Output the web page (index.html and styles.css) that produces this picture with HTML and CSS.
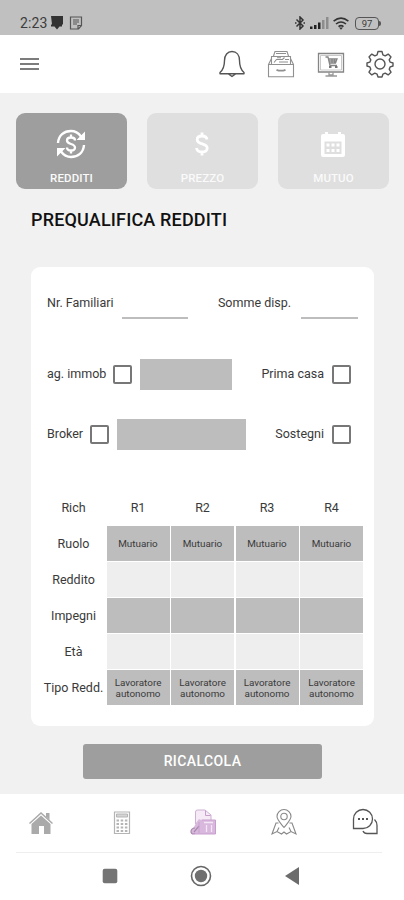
FILE: index.html
```html
<!DOCTYPE html>
<html lang="it">
<head>
<meta charset="utf-8">
<title>Prequalifica redditi</title>
<link rel="stylesheet" href="styles.css">
</head>
<body>
<div class="status">
  <span class="time">2:23</span>
  <svg class="st-msg" width="12" height="14" viewBox="0 0 12 14"><path fill="#333" d="M0 0h12v8.500h-1v2H8.500L6 13.500l-2.500-3H0v-2h1z"/></svg>
  <svg class="st-note" width="14" height="14" viewBox="0 0 14 14" fill="none" stroke="#555" stroke-width="1.200"><path d="M1.500 1h11v8.500L9.500 13h-8zM4 4h6M4 6h6M4 8h4M9 12.500V9.500h3"/></svg>
  <span class="spacer"></span>
  <svg class="st-bt" width="10" height="14" viewBox="0 0 10 14" fill="none" stroke="#333" stroke-width="1.500"><path d="M1.500 3.500l6.500 6.500-3 3V1l3 3-6.500 6.500M0 7h1.500M8.500 7H10"/></svg>
  <svg class="st-sig" width="19" height="12" viewBox="0 0 19 12"><path fill="#222" d="M0 9.500h2.500V12H0zM4 8h2.500v4H4zM8 5.500h2.500V12H8z"/><path fill="#8d8d8d" d="M12 3h2.500v9H12zM16 0h2.500v12H16z"/></svg>
  <svg class="st-wifi" width="16" height="13" viewBox="0 0 16 13" fill="none" stroke="#333" stroke-width="1.600"><path d="M.6 4.200q7.400-6 14.800 0M3 7q5-4 10 0M5.500 9.600q2.500-2 5 0"/><path fill="#333" stroke="none" d="M6 10.500h4l-2 2.300z"/></svg>
  <span class="battery">97</span><span class="tip"></span>
</div>
<header class="top">
  <div class="menu"><i></i><i></i><i></i></div>
  <span class="spacer"></span>
  <svg width="28" height="28" viewBox="0 0 28 28" fill="none" stroke="#555" stroke-width="1.400" stroke-linejoin="round"><path d="M2 22.500c3.500-3 4.500-6 4.500-12C6.500 5 9.500 1.500 14 1.500s7.500 3.500 7.500 9c0 6 1 9 4.500 12v1.200H2zM10.500 24l3.500 2.500 3.500-2.500"/></svg>
  <svg width="28" height="28" viewBox="0 0 28 28" fill="none" stroke="#909090" stroke-width="1.100"><path d="M1.500 14.500h25v12.300h-25zM1.500 14.500l3-6M26.500 14.500l-3-6M4.500 14V6.500h19V14M6.500 6L8 1.500h12L21.500 6M9 3.500h10M7 12.500l2.500-3h6l2-2M12 12h9M10 7.800h4M18 9.500h4"/><path stroke-width="1.800" d="M9.500 19.800q4.500 1.800 9 0"/></svg>
  <svg width="28" height="28" viewBox="0 0 28 28" fill="none" stroke="#858585" stroke-width="1.300"><path d="M1.500 3.500h25v18.500h-25z"/><path stroke="#bbb" stroke-width=".8" d="M3.500 5.500h21v14.500h-21z"/><path d="M8.500 7h2.500l2 8.500h7M11.500 9h8.500l-1.500 4h-6M12 11h7M15 9v4M17.500 9v4"/><path fill="#777" stroke="none" d="M12 16h2.500v2H12zM18 16h2.500v2H18z"/><path stroke="#999" d="M12 22v3h4v-3M8.500 26h11.500"/></svg>
  <svg width="28" height="28" viewBox="0 0 28 28" fill="none" stroke="#555" stroke-width="1.400" stroke-linejoin="round"><circle cx="14" cy="14" r="5"/><path d="M12 1.500h4l.9 3.400 2.300 1 3-1.800 2.800 2.800-1.800 3 1 2.300 2.800.8v3l-2.800.9-1 2.300 1.800 3-2.800 2.700-3-1.700-2.300 1-.9 2.800h-4l-.9-2.800-2.300-1-3 1.700L3 22.200l1.800-3-1-2.300L1 16v-3l2.800-.8 1-2.300-1.800-3 2.800-2.800 3 1.800 2.300-1z"/></svg>
</header>
<main>
  <nav class="tabs">
    <div class="tab active">
      <svg width="30" height="30" viewBox="0 0 30 30" fill="none" stroke="#fff" stroke-width="2.400"><path d="M2 14C2.500 6.500 8 2 15 2q6 0 10 5.500M28 16c-.5 7.500-6 12-13 12q-6 0-10-5.500"/><path fill="#fff" stroke="none" d="M29 2.500v8.500h-8.500zM1 27.500v-8.500h8.500z"/><path stroke-width="2.300" d="M19 11.500c0-2-1.700-3-4-3s-4 1-4 3c0 4.500 8 2.500 8 7 0 2-1.700 3-4 3s-4-1-4-3M15 5.500v3M15 21.500v3"/></svg>
      <span>REDDITI</span>
    </div>
    <div class="tab">
      <svg width="30" height="30" viewBox="0 0 30 30" fill="none" stroke="#fff" stroke-width="2.800"><path d="M20 10.500c-.3-2.500-2-3.500-5-3.500s-4.800 1.300-4.800 3.700c0 5.300 10 3 10 8.300 0 2.500-2 4-5.200 4s-5.200-1.300-5.400-4M15 3.500V7M15 23v3.500"/></svg>
      <span>PREZZO</span>
    </div>
    <div class="tab">
      <svg width="30" height="30" viewBox="0 0 30 30"><path fill="#fff" fill-rule="evenodd" d="M5 5h2V3h3v2h10V3h3v2h2q2 0 2 2v19q0 2-2 2H5q-2 0-2-2V7q0-2 2-2zM6.500 12.500V25h17V12.500z"/><path fill="#fff" d="M8.500 14.500h3v3h-3zM13.500 14.500h3v3h-3zM18.500 14.500h3v3h-3zM8.500 20h3v3h-3zM13.500 20h3v3h-3zM18.500 20h3v3h-3z"/></svg>
      <span>MUTUO</span>
    </div>
  </nav>
  <h1>PREQUALIFICA REDDITI</h1>
  <section class="card">
    <div class="row first">
      <label>Nr. Familiari</label><span class="line fam"></span>
      <span class="spacer"></span>
      <label>Somme disp.</label><span class="line somme"></span>
    </div>
    <div class="row">
      <label>ag. immob</label><span class="check"></span><span class="field ag"></span>
      <span class="spacer"></span>
      <label>Prima casa</label><span class="check end"></span>
    </div>
    <div class="row">
      <label>Broker</label><span class="check"></span><span class="field broker"></span>
      <span class="spacer"></span>
      <label>Sostegni</label><span class="check end"></span>
    </div>
    <div class="grid">
      <div class="name">Rich</div><div class="head">R1</div><div class="head">R2</div><div class="head">R3</div><div class="head">R4</div>
      <div class="name">Ruolo</div><div class="cell">Mutuario</div><div class="cell">Mutuario</div><div class="cell">Mutuario</div><div class="cell">Mutuario</div>
      <div class="name">Reddito</div><div class="cell light"></div><div class="cell light"></div><div class="cell light"></div><div class="cell light"></div>
      <div class="name">Impegni</div><div class="cell"></div><div class="cell"></div><div class="cell"></div><div class="cell"></div>
      <div class="name">Età</div><div class="cell light"></div><div class="cell light"></div><div class="cell light"></div><div class="cell light"></div>
      <div class="name">Tipo Redd.</div><div class="cell">Lavoratore<br>autonomo</div><div class="cell">Lavoratore<br>autonomo</div><div class="cell">Lavoratore<br>autonomo</div><div class="cell">Lavoratore<br>autonomo</div>
    </div>
  </section>
  <div class="button">RICALCOLA</div>
</main>
<nav class="bottom">
  <svg width="28" height="28" viewBox="0 0 28 28"><path fill="#aaa" d="M14 7.500L23.500 16v10h-6.500v-8h-5v8H4.500V16z"/><path fill="none" stroke="#aaa" stroke-width="1.500" d="M2.500 15.500L14 5l11.500 10.500"/><path fill="#aaa" d="M19 5h3.500v7L19 8.500z"/></svg>
  <svg width="28" height="28" viewBox="0 0 28 28" fill="none" stroke="#b4b4b4"><path stroke-width="1.200" d="M6.500 4h15v21.500h-15z"/><path fill="#d4d4d4" d="M8.500 6h11v3h-11z"/><path stroke-width="2" stroke-dasharray="2.500 1.700" d="M8.500 12.500h11.500M8.500 16h11.500M8.500 19.500h11.500M8.500 23h11.500"/></svg>
  <svg width="28" height="28" viewBox="0 0 28 28"><path fill="#f5eaf6" stroke="#cdb0d2" d="M6.500 16V4q0-2 2-2h7.500l6 5v5"/><path fill="#d9b8de" d="M7 15l3-4 4 2v13H2v-4l3-3zM13 12h13.500v14H13z"/><path fill="none" stroke="#a78bad" stroke-width="1.200" d="M6 25.500q-4.500 1-4-2.500.5-3 4-3M5 24l5-6"/><path fill="none" stroke="#f4e6f6" stroke-width="1.300" d="M15 14.500h9M17.500 17v7M22.500 17v7"/><path fill="none" stroke="#c79fcd" d="M16.500 2.500v5h5M12.500 12h14v14H3M10 14v11"/></svg>
  <svg width="28" height="28" viewBox="0 0 28 28" fill="none" stroke="#888" stroke-width="1.100"><path d="M14 19.500C9.500 14 7 11.500 7 8.500a7 7 0 0 1 14 0c0 3-2.500 5.500-7 11zM8.500 15H6L2 26l5-2.500 4.500 2.500 2.500-2 2.500 2 4.500-2.500L26 26l-4-11h-2.500M7 23.500l2-4M21 23.500l-2-4"/><circle cx="14" cy="8.500" r="3.200"/></svg>
  <svg width="28" height="28" viewBox="0 0 28 28" fill="none" stroke="#555" stroke-width="1.300"><path d="M2.500 20.500V11a9.500 9.500 0 1 1 9.500 9.500zM23.500 11.500q2.500 2.500 2.500 6v8H16q-3 0-4-2.500"/><path stroke-width="1.800" stroke-dasharray="2 2" d="M7 11h10"/></svg>
</nav>
<footer class="system">
  <svg width="16" height="16" viewBox="0 0 16 16"><rect x=".7" y=".7" width="14.600" height="14.600" rx="2" fill="#747474"/></svg>
  <svg width="22" height="22" viewBox="0 0 22 22"><circle cx="11" cy="11" r="9.500" fill="none" stroke="#666" stroke-width="1.600"/><circle cx="11" cy="11" r="6.200" fill="#707070"/></svg>
  <svg width="16" height="18" viewBox="0 0 16 18"><path fill="#6c6c6c" d="M15 0v18L1 9z"/></svg>
</footer>
</body>
</html>
```

FILE: styles.css
```css
* { box-sizing: border-box; }
body { margin: 0; width: 404px; height: 900px; display: flex; flex-direction: column; overflow: hidden; background: #fff; color: #3a3a3a; font-family: Roboto, "Liberation Sans", sans-serif; }
svg { display: block; flex: none; }
.spacer { flex: 1; }
.status { height: 35px; background: #c0c0c0; display: flex; align-items: center; padding: 11px 23px 0 20px; }
.time { font-size: 14px; line-height: 16px; letter-spacing: 0.1px; width: 31px; color: #3c3c3c; }
.st-note { margin-left: 6px; }
.st-bt { margin-right: 5px; }
.st-wifi { margin: 0 6px 0 4px; }
.battery { width: 24px; height: 13px; border: 1.500px solid #555; border-radius: 4px; font-size: 9.500px; line-height: 11px; text-align: center; }
.tip { width: 2px; height: 5px; background: #555; border-radius: 0 2px 2px 0; }
.top { height: 58px; display: flex; align-items: center; gap: 21.300px; padding: 0 10px 0 20px; }
.menu { width: 19px; display: flex; flex-direction: column; gap: 3.400px; }
.menu i { height: 2px; background: #7c7c7c; }
main { height: 701px; background: #f1f1f1; display: flex; flex-direction: column; }
.tabs { display: flex; gap: 20px; padding: 20px 0 0 16px; }
.tab { flex: none; width: 111px; height: 76px; border-radius: 9px; background: #dfdfdf; color: #fafafa; display: flex; flex-direction: column; align-items: center; padding-top: 16px; font-size: 11.500px; font-weight: 500; line-height: 14px; letter-spacing: 0.100px; }
.tab svg { margin-right: 1px; }
.tab span { margin-top: 12px; }
.tab.active { background: #9e9e9e; }
h1 { margin: 18px 0 0 31px; font-size: 18px; line-height: 26px; font-weight: 500; letter-spacing: 0.170px; color: #111; white-space: nowrap; }
.card { width: 343px; height: 459px; margin: 34px 0 0 31px; border-radius: 9px; background: #fff; padding: 5px 11px 0 9px; }
.row { height: 60px; display: flex; align-items: center; padding: 0 12px 0 7px; font-size: 12.500px; white-space: nowrap; }
.row label { margin-bottom: 2px; }
.row.first { height: 62px; margin-bottom: 10px; padding-right: 5px; }
.line { height: 1.500px; background: #bdbdbd; margin-top: 30px; }
.fam { width: 66px; margin-left: 9px; }
.somme { width: 57px; margin-left: 10px; }
.check { width: 19px; height: 19px; border: 2px solid #777; border-radius: 2px; margin-left: 7px; }
.end { margin-left: 8px; }
.field { height: 31px; background: #bdbdbd; margin-left: 7.400px; }
.ag { width: 92px; }
.broker { width: 129px; }
.grid { display: grid; grid-template-columns: 65px repeat(4, 63px); grid-template-rows: 36px repeat(5, 35px); column-gap: 1.500px; row-gap: 1px; margin-top: 25px; }
.grid > div { display: flex; align-items: center; justify-content: center; text-align: center; white-space: nowrap; }
.name, .head { font-size: 12.500px; }
.grid > .name { padding-left: 2px; }
.cell { background: #bdbdbd; font-size: 9.900px; line-height: 11px; }
.cell.light { background: #eee; }
.button { width: 239px; height: 35px; margin: 18px 0 0 83px; border-radius: 3px; background: #9e9e9e; color: #fff; font-size: 14px; font-weight: 500; letter-spacing: 0.400px; line-height: 35px; text-align: center; }
.bottom { height: 59px; margin: 0 22px 0 16px; border-bottom: 1px solid #eee; display: flex; justify-content: space-between; padding: 0 3px 2px 11px; align-items: center; }
.system { height: 47px; display: flex; align-items: center; padding: 0 104px 1px 102px; justify-content: space-between; }
```
